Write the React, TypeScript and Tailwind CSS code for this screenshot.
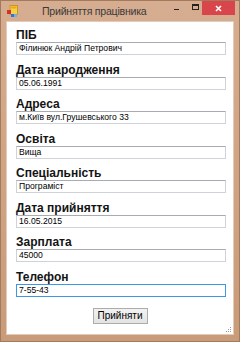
import React from 'react';

const fields: { label: string; value: string; mt: number; focus?: boolean }[] = [
  { label: 'ПІБ', value: 'Філинюк Андрій Петрович', mt: 7 },
  { label: 'Дата народження', value: '05.06.1991', mt: 9 },
  { label: 'Адреса', value: 'м.Київ вул.Грушевського 33', mt: 8 },
  { label: 'Освіта', value: 'Вища', mt: 9 },
  { label: 'Спеціальність', value: 'Програміст', mt: 8 },
  { label: 'Дата прийняття', value: '16.05.2015', mt: 9 },
  { label: 'Зарплата', value: '45000', mt: 8 },
  { label: 'Телефон', value: '7-55-43', mt: 9, focus: true },
];

function AppIcon() {
  return (
    <svg width="11" height="12" viewBox="0 0 11 12">
      <rect x="3" y="0.5" width="7.5" height="9" fill="#f3d24a" stroke="#c79a1c" strokeWidth="1" />
      <rect x="4" y="1.5" width="5.5" height="2" fill="#f7a21b" />
      <rect x="0" y="5" width="4" height="4" fill="#d3312b" />
      <rect x="4" y="9" width="3" height="3" fill="#3b6fd0" />
      <rect x="7" y="9" width="3" height="3" fill="#6fb0e8" />
    </svg>
  );
}

function Field({ label, value, mt, focus }: { label: string; value: string; mt: number; focus?: boolean }) {
  return (
    <div style={{ marginTop: mt }} className="flex flex-col">
      <div className="h-[13px] text-[12px] leading-[13px] font-bold text-[#141414] whitespace-nowrap">{label}</div>
      <div
        className={
          focus
            ? 'h-[13px] w-[210px] border border-[#3d96e6] bg-white pl-[2px] text-[8.6px] leading-[11px] text-black whitespace-nowrap overflow-hidden'
            : 'h-[13px] w-[210px] border border-[#d0d2d9] border-t-[#a9abb2] bg-white pl-[2px] text-[8.6px] leading-[11px] text-black whitespace-nowrap overflow-hidden'
        }
      >
        {value}
      </div>
    </div>
  );
}

export default function App() {
  return (
    <div
      className="w-[240px] h-[342px] flex flex-col bg-gradient-to-b from-[#d6ad90] to-[#c89b79] border border-[#a47a5c]"
      style={{ fontFamily: '"Liberation Sans", Arial, sans-serif' }}
    >
      {/* title bar */}
      <div className="h-[20px] flex items-start">
        <div className="mt-[4px] ml-[6px]">
          <AppIcon />
        </div>
        <div className="ml-[24px] mt-[3px] text-[10.6px] tracking-[-0.25px] leading-[14px] text-[#3a3a3a] whitespace-nowrap">
          Прийняття працівника
        </div>
        <div className="flex-1" />
        <div className="mt-[8px] w-[5px] h-[1px] bg-[#222]" />
        <div className="ml-[13px] mt-[3px] w-[7px] h-[6px] border border-[#222] border-t-2" />
        <div className="ml-[3px] w-[33px] h-[14px] bg-[#d8464b] flex items-center justify-center">
          <svg width="7" height="7" viewBox="0 0 7 7">
            <path d="M1 1 L6 6 M6 1 L1 6" stroke="#fff" strokeWidth="1.6" />
          </svg>
        </div>
        <div className="w-[4px]" />
      </div>

      {/* client area */}
      <div className="mx-[5px] h-[314px] bg-white border border-[#e2cbb9] relative flex flex-col pl-[9px]">
        {fields.map((f) => (
          <Field key={f.label} {...f} />
        ))}
        <div className="flex justify-center pr-[9px] mt-[11px]">
          <button className="w-[55px] h-[16px] border border-[#acacac] bg-gradient-to-b from-[#f2f2f2] to-[#e3e3e3] text-[10px] leading-[14px] text-black">
            Прийняти
          </button>
        </div>
        <svg className="absolute right-[1px] bottom-[1px]" width="6" height="6" viewBox="0 0 6 6">
          <rect x="4" y="0" width="1" height="1" fill="#9a9a9a" />
          <rect x="2" y="2" width="1" height="1" fill="#9a9a9a" />
          <rect x="4" y="2" width="1" height="1" fill="#9a9a9a" />
          <rect x="0" y="4" width="1" height="1" fill="#9a9a9a" />
          <rect x="2" y="4" width="1" height="1" fill="#9a9a9a" />
          <rect x="4" y="4" width="1" height="1" fill="#9a9a9a" />
        </svg>
      </div>
    </div>
  );
}
